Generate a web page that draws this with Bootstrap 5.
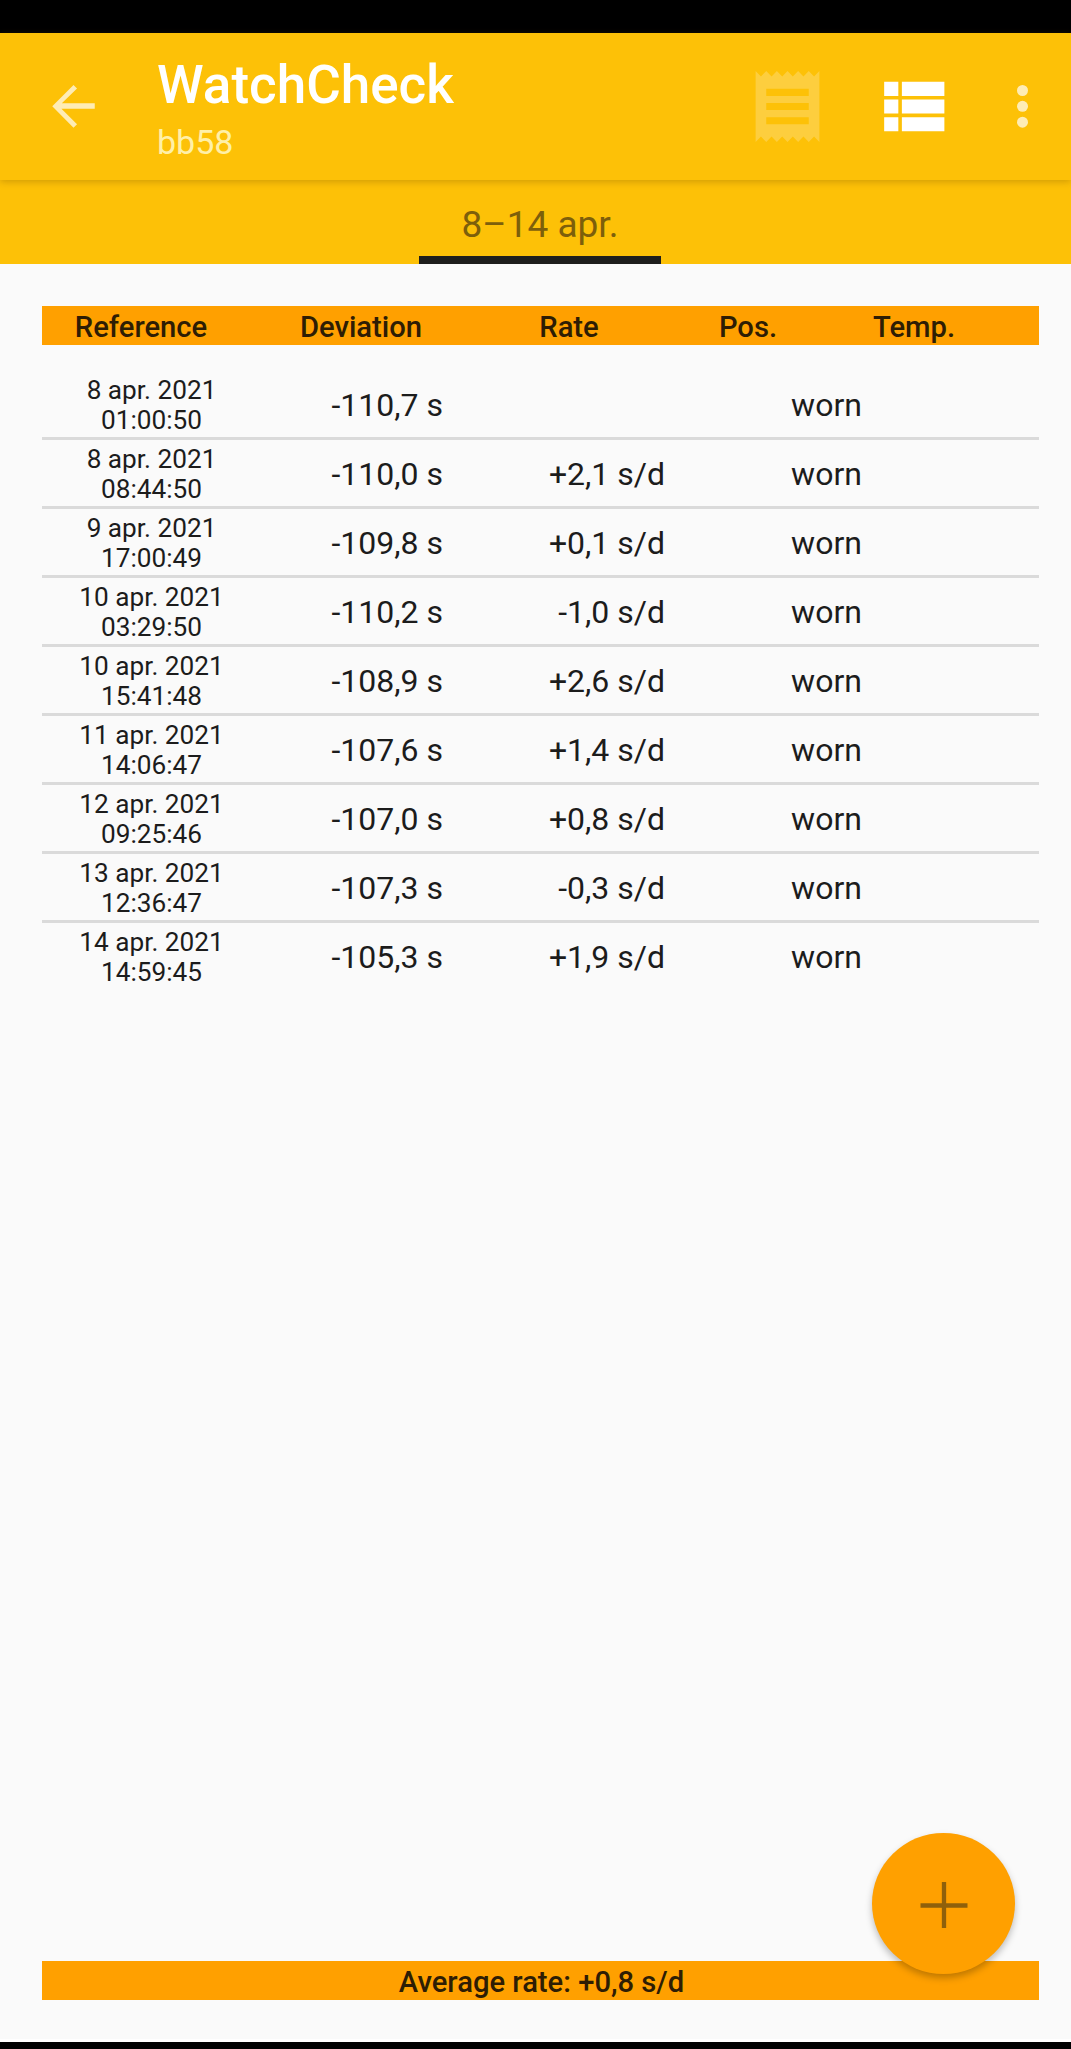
<!DOCTYPE html>
<html lang="en">
<head>
<meta charset="utf-8">
<meta name="viewport" content="width=device-width, initial-scale=1">
<title>WatchCheck</title>
<link href="https://cdn.jsdelivr.net/npm/bootstrap@5.3.0/dist/css/bootstrap.min.css" rel="stylesheet">
<style>
body{font-family:Roboto,"Noto Sans",sans-serif;background:#fafafa;color:#1c1c1c;height:2049px;overflow:hidden}
.status-strip{height:33px;background:#000}
.app-bar{height:147px;background:#fdc107;padding-left:31px;box-shadow:0 2px 7px rgba(120,80,0,.32);position:relative;z-index:1}
.app-bar svg{display:block;fill:#fff}
.titles{margin-left:41px;padding-top:19px}
.app-title{font-size:53px;line-height:66px;font-weight:500;color:#fff}
.app-sub{font-size:34px;line-height:49px;color:#fff0a8}
.acts{margin-right:6px}
.list-ico{margin-left:40px}
.more-ico{margin-left:25px}
.tab-strip{height:84px;background:#fdc107;padding-left:9px}
.tab-item{width:242px;height:84px;border-bottom:8px solid #1e1e1c;font-size:37px;line-height:89px;color:#7d5f0b}
.sheet{width:997px;margin-left:42px}
.bar{height:39px;background:#ffa000;font-size:29.2px;line-height:42px;font-weight:500;color:#2e1d04}
.heads{margin-top:42px;margin-bottom:26px}
.reading{height:69px;border-bottom:3px solid #dadada;font-size:32px;line-height:38px}
.reading:last-child{border-bottom-color:transparent}
.h1c{width:198px}.h2c{width:242px}.h3c{width:174px}.h4c{width:184px}.h5c{width:148px}
.c-ref{width:219px;font-size:26.2px;line-height:30px;padding-top:4px}
.c-dev{width:182px}.c-rate{width:222px}.c-pos{width:323px}
.c-dev,.c-rate,.c-pos{padding-top:15px}
.foot{margin-bottom:39px;padding-left:2px}
.nav-edge{height:10px;background:#000;border-top:3px solid #fff;flex-shrink:0}
.fab{position:absolute;left:872px;top:1833px;width:143px;height:141px;background:#ffa000;box-shadow:0 4px 7px rgba(0,0,0,.25);z-index:2}
</style>
<script src="https://cdn.jsdelivr.net/npm/bootstrap@5.3.0/dist/js/bootstrap.bundle.min.js"></script>
</head>
<body class="d-flex flex-column position-relative">
<div class="status-strip flex-shrink-0"></div>
<header class="app-bar d-flex flex-shrink-0">
  <svg class="align-self-center" width="85" height="85" viewBox="0 0 24 24" opacity=".7"><path d="M18 11.1v1.500H8.600l4.400 4.400-1 1L6 11.900 12 5.900l1 1-4.300 4.200z"/></svg>
  <div class="titles"><div class="app-title">WatchCheck</div><div class="app-sub">bb58</div></div>
  <div class="acts d-flex align-items-center ms-auto">
    <svg width="85" height="85" viewBox="0 0 24 24" opacity=".22"><path d="M18 17H6v-2h12v2zm0-4H6v-2h12v2zm0-4H6V7h12v2zM3 22l1.500-1.500L6 22l1.500-1.500L9 22l1.500-1.500L12 22l1.500-1.500L15 22l1.500-1.500L18 22l1.500-1.500L21 22V2l-1.500 1.500L18 2l-1.500 1.500L15 2l-1.500 1.500L12 2l-1.500 1.500L9 2 7.500 3.500 6 2 4.500 3.500 3 2v20z"/></svg>
    <svg class="list-ico" width="85" height="85" viewBox="0 0 24 24"><path d="M4 14h4v-4H4v4zm0 5h4v-4H4v4zM4 9h4V5H4v4zm5 5h12v-4H9v4zm0 5h12v-4H9v4zM9 5v4h12V5H9z"/></svg>
    <svg class="more-ico" width="85" height="85" viewBox="0 0 85 85" opacity=".7"><circle cx="42.500" cy="26.500" r="5.500"/><circle cx="42.500" cy="42.300" r="5.500"/><circle cx="42.500" cy="58.200" r="5.500"/></svg>
  </div>
</header>
<nav class="tab-strip d-flex justify-content-center flex-shrink-0"><div class="tab-item text-center">8–14 apr.</div></nav>
<main class="sheet d-flex flex-column flex-grow-1">
  <div class="bar heads d-flex text-center flex-shrink-0"><div class="h1c">Reference</div><div class="h2c">Deviation</div><div class="h3c">Rate</div><div class="h4c">Pos.</div><div class="h5c">Temp.</div></div>
  <div class="readings">
    <div class="reading d-flex"><div class="c-ref text-center">8 apr. 2021<br>01:00:50</div><div class="c-dev text-end">-110,7 s</div><div class="c-rate text-end"></div><div class="c-pos text-center">worn</div></div>
    <div class="reading d-flex"><div class="c-ref text-center">8 apr. 2021<br>08:44:50</div><div class="c-dev text-end">-110,0 s</div><div class="c-rate text-end">+2,1 s/d</div><div class="c-pos text-center">worn</div></div>
    <div class="reading d-flex"><div class="c-ref text-center">9 apr. 2021<br>17:00:49</div><div class="c-dev text-end">-109,8 s</div><div class="c-rate text-end">+0,1 s/d</div><div class="c-pos text-center">worn</div></div>
    <div class="reading d-flex"><div class="c-ref text-center">10 apr. 2021<br>03:29:50</div><div class="c-dev text-end">-110,2 s</div><div class="c-rate text-end">-1,0 s/d</div><div class="c-pos text-center">worn</div></div>
    <div class="reading d-flex"><div class="c-ref text-center">10 apr. 2021<br>15:41:48</div><div class="c-dev text-end">-108,9 s</div><div class="c-rate text-end">+2,6 s/d</div><div class="c-pos text-center">worn</div></div>
    <div class="reading d-flex"><div class="c-ref text-center">11 apr. 2021<br>14:06:47</div><div class="c-dev text-end">-107,6 s</div><div class="c-rate text-end">+1,4 s/d</div><div class="c-pos text-center">worn</div></div>
    <div class="reading d-flex"><div class="c-ref text-center">12 apr. 2021<br>09:25:46</div><div class="c-dev text-end">-107,0 s</div><div class="c-rate text-end">+0,8 s/d</div><div class="c-pos text-center">worn</div></div>
    <div class="reading d-flex"><div class="c-ref text-center">13 apr. 2021<br>12:36:47</div><div class="c-dev text-end">-107,3 s</div><div class="c-rate text-end">-0,3 s/d</div><div class="c-pos text-center">worn</div></div>
    <div class="reading d-flex"><div class="c-ref text-center">14 apr. 2021<br>14:59:45</div><div class="c-dev text-end">-105,3 s</div><div class="c-rate text-end">+1,9 s/d</div><div class="c-pos text-center">worn</div></div>
  </div>
  <div class="bar foot text-center mt-auto flex-shrink-0">Average rate: +0,8 s/d</div>
</main>
<div class="nav-edge"></div>
<button class="fab btn rounded-circle border-0 p-0 d-flex align-items-center justify-content-center" aria-label="Add"><svg width="48" height="48" viewBox="0 0 48 48" fill="none" stroke="#8f600b" stroke-width="4.300"><path d="M.5 25.500h47M24 2v46"/></svg></button>
</body>
</html>
